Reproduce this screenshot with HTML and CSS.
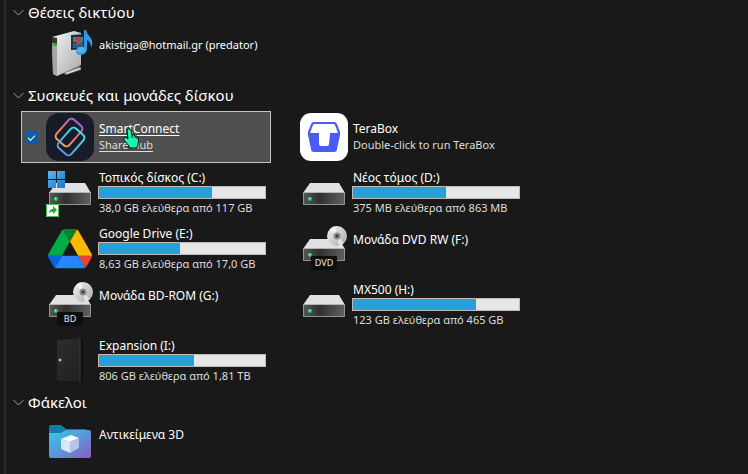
FILE: index.html
```html
<!DOCTYPE html>
<html lang="el">
<head>
  <meta charset="UTF-8" />
  <meta name="viewport" content="width=device-width, initial-scale=1.0"/>
  <title>Αυτός ο υπολογιστής</title>
  <link rel="stylesheet" href="styles.css">
</head>
<body>

<!-- shared shapes -->
<svg class="defs" aria-hidden="true">
  <defs>
    <linearGradient id="front" x1="0" y1="0" x2="1" y2="0">
      <stop offset="0" stop-color="#585858"/><stop offset=".4" stop-color="#303030"/><stop offset="1" stop-color="#626262"/>
    </linearGradient>
    <linearGradient id="metal" x1="0" y1="0" x2="1" y2="1">
      <stop offset="0" stop-color="#f4f4f4"/><stop offset="1" stop-color="#a9a9ab"/>
    </linearGradient>
    <linearGradient id="warm" x1="1" y1="0" x2="0" y2="0">
      <stop offset="0" stop-color="#b85fe8"/><stop offset=".5" stop-color="#e0747c"/><stop offset="1" stop-color="#f0a45c"/>
    </linearGradient>
    <linearGradient id="cool" x1="1" y1="0" x2="0" y2="0">
      <stop offset="0" stop-color="#35e6e2"/><stop offset="1" stop-color="#5c9df0"/>
    </linearGradient>
    <linearGradient id="folder" x1="0" y1="0" x2="1" y2="1">
      <stop offset="0" stop-color="#35c9e6"/><stop offset=".5" stop-color="#5a98d8"/><stop offset="1" stop-color="#8b5cc4"/>
    </linearGradient>
    <linearGradient id="win" x1="0" y1="0" x2="1" y2="1">
      <stop offset="0" stop-color="#5cb4f0"/><stop offset="1" stop-color="#1478d0"/>
    </linearGradient>
    <linearGradient id="case" x1="0" y1="0" x2="1" y2="1">
      <stop offset="0" stop-color="#2d2e2f"/><stop offset="1" stop-color="#1f2020"/>
    </linearGradient>
    <g id="drive">
      <path d="M10 14h29l6 10H3z" fill="#e1e1e5"/>
      <path d="M3 24h42v11q0 1-1 1H4q-1 0-1-1z" fill="url(#front)"/>
      <path d="M3.500 24v11.500h41V24" fill="none" stroke="#929292"/>
      <path d="M3 23.500h42" stroke="#b4b4b6"/>
      <circle cx="10" cy="30" r="2" fill="#16c755"/>
      <circle cx="9.500" cy="29.500" r="1" fill="#8dffb0"/>
    </g>
    <g id="disc">
      <circle cx="37" cy="11" r="10" fill="url(#metal)"/>
      <path d="M37 11 30 4a10 10 0 0 1 5-3zM37 11l7 7a10 10 0 0 1-5 3z" fill="#fff" opacity=".6"/>
      <circle cx="37" cy="11" r="3.500" fill="#8a8a8a"/>
      <circle cx="37" cy="11" r="1.500" fill="#3a3a3a"/>
    </g>
  </defs>
</svg>

<main>

<section class="group">
  <h2><button type="button"><svg viewBox="0 0 11 7"><path d="M.5 1 5.500 6 10.500 1"/></svg>Θέσεις δικτύου</button></h2>
  <ul class="tiles">
    <li class="tile network">
      <svg class="icon" viewBox="0 0 48 48">
        <path d="M17 43l16-7 2 1v3l-15 5z" fill="#77777a"/>
        <path d="M19 43l14-5 2 1-14 5z" fill="#e0e0e0"/>
        <path d="M6 7 28 1l7 2v32L11 46l-4-2z" fill="url(#metal)"/>
        <path d="M6 7l5 1v38l-4-2z" fill="#a4a4a6"/>
        <path d="M6 7l5 1v6l-5-1z" fill="#343636"/>
        <path d="M6 14h5v2H6z" fill="#34b63c"/>
        <path d="M25 5l14-1v15l-14 1z" fill="#1f2c3a"/>
        <path d="M27 7h10v5H27z" fill="#3a7eae"/>
        <path d="M27 13h10v5H27z" fill="#2a5e8c"/>
        <path d="M29 8h6l-1 4 3 1-6 2z" fill="#b34b34"/>
        <path d="M26 5v15" stroke="#4a4f55" stroke-dasharray="1 2"/>
        <path d="M38 0h2q1 4 4 7 4 4 1 11 0-6-4-8v9q0 5-6 6-5 0-5-4 1-5 8-4z" fill="#2f9be6"/>
        <ellipse cx="35" cy="20" rx="4" ry="3" fill="#6ec3f8" opacity=".6"/>
      </svg>
      <div class="info">
        <span class="name">akistiga@hotmail.gr (predator)</span>
      </div>
    </li>
  </ul>
</section>

<section class="group">
  <h2><button type="button"><svg viewBox="0 0 11 7"><path d="M.5 1 5.500 6 10.500 1"/></svg>Συσκευές και μονάδες δίσκου</button></h2>
  <ul class="tiles">
    <li class="tile program selected">
      <input type="checkbox" aria-label="SmartConnect" checked>
      <svg class="icon" viewBox="0 0 48 48">
        <rect width="48" height="48" rx="13" fill="#181c29"/>
        <g fill="none" stroke-width="2">
          <rect x="10" y="11" width="26" height="17" rx="4" transform="rotate(-49 23 19.500)" stroke="url(#warm)"/>
          <rect x="12" y="20" width="26" height="17" rx="4" transform="rotate(-49 25 28.500)" stroke="url(#cool)"/>
        </g>
      </svg>
      <a class="info" href="#">
        <span class="name">SmartConnect</span>
        <span class="sub">Share Hub</span>
      </a>
      <svg class="cursor" viewBox="0 0 16 22">
        <path d="M4 2q2-3 4 0l1 5q2-1 3 1 2-1 2 1 2 0 1.500 3L15 17l-1 2v1H6v-2l-5-6q-1-3 1-3l3 2z" fill="#19f5b4" stroke="#0a1512"/>
        <path d="M9 7v3M12 8v2M14 9v2" stroke="#0a1512"/>
      </svg>
    </li>
    <li class="tile program">
      <svg class="icon" viewBox="0 0 48 48">
        <rect width="48" height="48" rx="11" fill="#fff"/>
        <path d="M14 9h20q2 0 3 2l3 8v3l-3 14q0 3-3 3H14q-3 0-3-3L8 22v-3l3-8q1-2 3-2z" fill="#4a5cf5"/>
        <path d="M14 11h20l1 1 3 8H10l3-8z" fill="#fff"/>
        <path d="M19 19h11v2l-1 10q0 2-2 2h-6q-2 0-2-2z" fill="#fff"/>
      </svg>
      <div class="info">
        <span class="name">TeraBox</span>
        <span class="sub">Double-click to run TeraBox</span>
      </div>
    </li>

    <li class="tile volume">
      <svg class="icon" viewBox="0 0 48 48">
        <use href="#drive"/>
        <path d="M2 2h8v8H2zM11 2h8v8h-8zM2 11h8v8H2zM11 11h8v8h-8z" fill="url(#win)"/>
        <path d="M0 35h13v13H0z" fill="#fff"/>
        <path d="M.5 35.500h12v12H.5z" fill="none" stroke="#43c04f"/>
        <path d="M3 45q0-5 4-5v-3l4 4-4 4v-2q-3-1-4 2z" fill="#2aa53a"/>
      </svg>
      <div class="info">
        <span class="name">Τοπικός δίσκος (C:)</span>
        <div class="bar"><div style="width:68%"></div></div>
        <span class="sub">38,0 GB ελεύθερα από 117 GB</span>
      </div>
    </li>
    <li class="tile volume">
      <svg class="icon" viewBox="0 0 48 48"><use href="#drive"/></svg>
      <div class="info">
        <span class="name">Νέος τόμος (D:)</span>
        <div class="bar"><div style="width:56%"></div></div>
        <span class="sub">375 MB ελεύθερα από 863 MB</span>
      </div>
    </li>

    <li class="tile volume">
      <svg class="icon" viewBox="0 0 48 48">
        <g transform="translate(2 4) scale(.504)">
          <path d="m6.600 66.850 3.850 6.650c.8 1.400 1.950 2.500 3.300 3.300l13.750-23.800h-27.500c0 1.550.4 3.100 1.200 4.500z" fill="#0066da"/>
          <path d="m43.650 25-13.750-23.800c-1.350.8-2.500 1.900-3.300 3.300l-25.400 44a9.060 9.060 0 0 0 -1.200 4.500h27.500z" fill="#00ac47"/>
          <path d="m73.550 76.800c1.350-.8 2.500-1.900 3.300-3.300l1.600-2.750 7.650-13.250c.8-1.400 1.200-2.950 1.200-4.500h-27.500l5.850 11.500z" fill="#ea4335"/>
          <path d="m43.650 25 13.750-23.800c-1.350-.8-2.900-1.200-4.500-1.200h-18.500c-1.600 0-3.150.45-4.500 1.200z" fill="#00832d"/>
          <path d="m59.800 53h-32.300l-13.750 23.800c1.350.8 2.900 1.200 4.500 1.200h50.800c1.600 0 3.150-.45 4.500-1.200z" fill="#2684fc"/>
          <path d="m73.400 26.500-12.700-22c-.8-1.400-1.950-2.500-3.300-3.300l-13.750 23.800 16.150 28h27.450c0-1.550-.4-3.100-1.200-4.500z" fill="#ffba00"/>
        </g>
      </svg>
      <div class="info">
        <span class="name">Google Drive (E:)</span>
        <div class="bar"><div style="width:49%"></div></div>
        <span class="sub">8,63 GB ελεύθερα από 17,0 GB</span>
      </div>
    </li>
    <li class="tile">
      <svg class="icon" viewBox="0 0 48 48">
        <use href="#drive"/><use href="#disc"/>
        <rect x="11" y="31" width="26" height="14" rx="1" fill="#0e0e0e"/>
        <text x="24" y="41">DVD</text>
      </svg>
      <div class="info">
        <span class="name">Μονάδα DVD RW (F:)</span>
      </div>
    </li>

    <li class="tile">
      <svg class="icon" viewBox="0 0 48 48">
        <use href="#drive"/><use href="#disc"/>
        <rect x="11" y="31" width="26" height="14" rx="1" fill="#0e0e0e"/>
        <text x="24" y="41">BD</text>
      </svg>
      <div class="info">
        <span class="name">Μονάδα BD-ROM (G:)</span>
      </div>
    </li>
    <li class="tile volume">
      <svg class="icon" viewBox="0 0 48 48"><use href="#drive"/></svg>
      <div class="info">
        <span class="name">MX500 (H:)</span>
        <div class="bar"><div style="width:74%"></div></div>
        <span class="sub">123 GB ελεύθερα από 465 GB</span>
      </div>
    </li>

    <li class="tile volume">
      <svg class="icon" viewBox="0 0 48 48">
        <path d="M12 3 34 1l3 2v41l-4 2-21-2z" fill="#0f0f0f"/>
        <path d="M13 3q-2 0-2 2v37q0 2 2 2l21 1V1z" fill="url(#case)"/>
        <path d="M34 2v43" stroke="#3b3c3c"/>
        <circle cx="14" cy="23" r="1.500" fill="#b8b8b8"/>
      </svg>
      <div class="info">
        <span class="name">Expansion (I:)</span>
        <div class="bar"><div style="width:57%"></div></div>
        <span class="sub">806 GB ελεύθερα από 1,81 TB</span>
      </div>
    </li>
  </ul>
</section>

<section class="group">
  <h2><button type="button"><svg viewBox="0 0 11 7"><path d="M.5 1 5.500 6 10.500 1"/></svg>Φάκελοι</button></h2>
  <ul class="tiles">
    <li class="tile">
      <svg class="icon" viewBox="0 0 48 48">
        <path d="M3 7q0-2 2-2h10l5 4h20v10H3z" fill="#137ba6"/>
        <path d="M3 13h12l5-3h23q2 0 2 2v24q0 2-2 2H5q-2 0-2-2z" fill="url(#folder)"/>
        <path d="M15 19l10-4 8 3-9 4z" fill="#f5fafe"/>
        <path d="M15 19l9 3v11l-9-4z" fill="#d5e6f8"/>
        <path d="M24 22l9-4v10l-9 5z" fill="#b4c4ec"/>
      </svg>
      <div class="info">
        <span class="name">Αντικείμενα 3D</span>
      </div>
    </li>
  </ul>
</section>

</main>

</body>
</html>
```
FILE: styles.css
```css
* {
  box-sizing: border-box;
}

body {
  margin: 0;
  padding-left: 4px;
  background: #191919;
  color: #fff;
  font-family: "Noto Sans", "Open Sans", sans-serif;
  font-size: 12px;
  line-height: 16px;
}

main {
  min-height: 100vh;
  border-left: 2px solid #2b2b2b;
  padding-left: 7px;
}

.defs {
  position: absolute;
  width: 0;
  height: 0;
}

.group + .group {
  margin-top: 3px;
}

h2 {
  margin: 0;
  padding-bottom: 4px;
  font-weight: normal;
}

h2 button {
  display: flex;
  align-items: center;
  gap: 4px;
  height: 24px;
  padding: 0;
  border: none;
  background: none;
  color: #fff;
  font: inherit;
  font-size: 15px;
}

h2 svg {
  width: 11px;
  height: 7px;
  fill: none;
  stroke: #a0a0a0;
}

.tiles {
  display: grid;
  grid-template-columns: repeat(auto-fill, 250px);
  gap: 4px;
  margin: 0;
  padding: 0 0 0 8px;
  list-style: none;
}

/* tile: tick box column, icon, text */
.tile {
  position: relative;
  display: grid;
  grid-template-columns: 20px 48px 1fr;
  column-gap: 4px;
  height: 52px;
  border: 1px solid transparent;
  white-space: nowrap;
}

.selected {
  background: #4f4f4f;
  border-color: #c4c4c4;
}

.tile input {
  appearance: none;
  align-self: center;
  width: 13px;
  height: 13px;
  margin: 0 0 0 3px;
  border-radius: 2px;
  background: #0b5cad;
}

.tile input:checked::after {
  content: "";
  display: block;
  width: 6px;
  height: 3px;
  margin: 4px 0 0 3px;
  border-left: 1px solid #fff;
  border-bottom: 1px solid #fff;
  transform: rotate(-45deg);
}

.icon {
  grid-column: 2;
  align-self: center;
  width: 48px;
  height: 48px;
}

.icon text {
  fill: #e8e8e8;
  font-size: 9px;
  text-anchor: middle;
}

.info {
  grid-column: 3;
  display: flex;
  flex-direction: column;
  align-items: flex-start;
  padding: 8px 0 0 1px;
  color: #fff;
  text-decoration: none;
}

.program .info {
  padding-top: 9px;
}

.volume .info {
  padding-top: 2px;
}

.sub {
  color: #dedede;
}

.sub,
.network .name {
  font-size: 11px;
}

.selected .name,
.selected .sub {
  text-decoration: underline;
  text-underline-offset: 2px;
}

.bar {
  width: 168px;
  height: 13px;
  margin-left: -1px;
  border: 1px solid #bcbcbc;
  background: #e6e6e6;
}

.bar + .sub {
  padding-top: 1px;
}

.bar div {
  height: 100%;
  background: #26a0da;
}

.cursor {
  position: absolute;
  left: 101px;
  top: 16px;
  width: 16px;
  height: 22px;
}
```
